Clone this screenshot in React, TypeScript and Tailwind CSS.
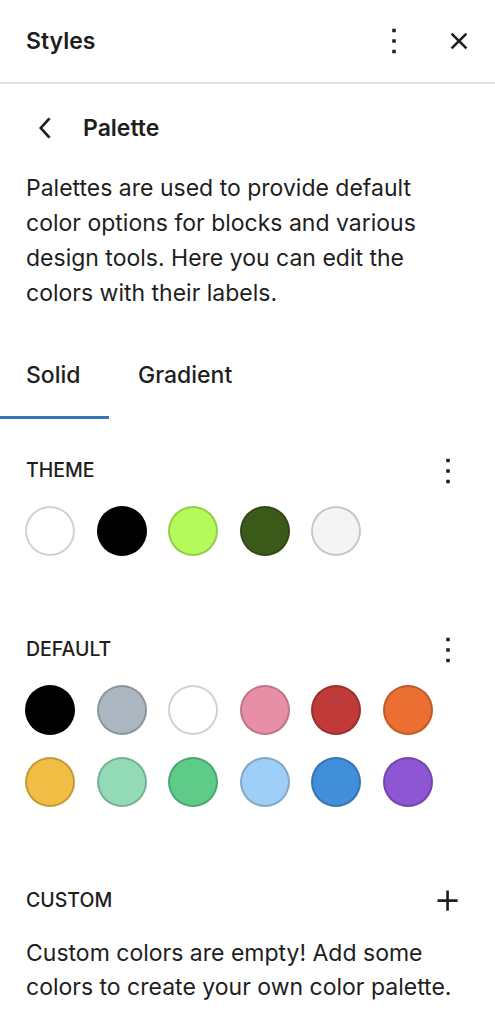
import React from 'react';

const themeColors = ['#ffffff', '#000000', '#b4fa5a', '#3b5a1a', '#f4f4f4'];

const defaultColors = [
  '#000000',
  '#abb6c0',
  '#ffffff',
  '#e78fa6',
  '#bf3a38',
  '#eb6f30',
  '#f1bd44',
  '#93dab6',
  '#5ecb88',
  '#9fcef6',
  '#418fd9',
  '#8e55d4',
];

// WordPress icons, 24 unit grid drawn at 42px
function MoreVertical() {
  return (
    <svg width="42" height="42" viewBox="0 0 24 24" fill="#1e1e1e" aria-hidden="true">
      <path d="M13 19h-2v-2h2v2zm0-6h-2v-2h2v2zm0-6h-2V5h2v2z" />
    </svg>
  );
}

function CloseSmall() {
  return (
    <svg width="42" height="42" viewBox="0 0 24 24" fill="#1e1e1e" aria-hidden="true">
      <path d="M12 13.06l3.712 3.713 1.061-1.06L13.061 12l3.712-3.712-1.06-1.06L12 10.938 8.288 7.227l-1.061 1.06L10.939 12l-3.712 3.712 1.06 1.061L12 13.061z" />
    </svg>
  );
}

function ChevronLeft() {
  return (
    <svg width="42" height="42" viewBox="0 0 24 24" fill="#1e1e1e" aria-hidden="true">
      <path d="M14.6 7l-1.2-1L8 12l5.4 6 1.2-1-4.6-5z" />
    </svg>
  );
}

function Plus() {
  return (
    <svg width="42" height="42" viewBox="0 0 24 24" fill="#1e1e1e" aria-hidden="true">
      <path d="M11 12.5V17.5H12.5V12.5H17.5V11H12.5V6H11V11H6V12.5H11Z" />
    </svg>
  );
}

function Swatch({ color }: { color: string }) {
  return (
    <button
      type="button"
      aria-label={color}
      className="w-[50px] h-[50px] rounded-full shadow-[inset_0_0_0_2px_rgba(0,0,0,0.18)]"
      style={{ backgroundColor: color }}
    />
  );
}

function SectionHeader({ title, action }: { title: string; action: React.ReactNode }) {
  return (
    <div className="flex items-center justify-between h-[48px] pl-[26px] pr-[26px]">
      <h3 className="text-[19.5px] font-medium uppercase text-[#1e1e1e]">{title}</h3>
      {action}
    </div>
  );
}

export default function App() {
  return (
    <div
      className="w-[495px] h-[1024px] bg-white overflow-hidden text-[#1e1e1e]"
      style={{ fontFamily: 'Inter, "Noto Sans", sans-serif' }}
    >
      {/* Panel header */}
      <header className="flex items-center justify-between h-[84px] pl-[26px] pr-[15px] border-b-2 border-[#e0e0e0]">
        <h2 className="text-[23px] font-semibold">Styles</h2>
        <div className="flex items-center gap-[23px]">
          <MoreVertical />
          <CloseSmall />
        </div>
      </header>

      {/* Navigator back row */}
      <div className="flex items-center h-[48px] mt-[20px] pl-[25px] gap-[16px]">
        <ChevronLeft />
        <h2 className="text-[23px] font-semibold">Palette</h2>
      </div>

      <p className="mt-[19px] pl-[26px] pr-[28px] text-[23px] leading-[35px]">
        Palettes are used to provide default color options for blocks and various design tools. Here you can edit the colors with their labels.
      </p>

      {/* Tabs */}
      <div className="flex mt-[24px] h-[84px]">
        <button type="button" className="w-[109px] pl-[26px] text-left text-[23px] font-medium border-b-[3px] border-[#3675b8]">
          Solid
        </button>
        <button type="button" className="pl-[29px] text-left text-[23px] font-medium border-b-[3px] border-transparent">
          Gradient
        </button>
      </div>

      {/* Theme palette */}
      <section className="mt-[28px]">
        <SectionHeader title="Theme" action={<MoreVertical />} />
        <div className="flex gap-[21.5px] px-[25px] mt-[11px]">
          {themeColors.map((c, i) => (
            <Swatch key={i} color={c} />
          ))}
        </div>
      </section>

      {/* Default palette */}
      <section className="mt-[70px]">
        <SectionHeader title="Default" action={<MoreVertical />} />
        <div className="grid grid-cols-[repeat(6,50px)] gap-x-[21.5px] gap-y-[22px] px-[25px] mt-[11px]">
          {defaultColors.map((c, i) => (
            <Swatch key={i} color={c} />
          ))}
        </div>
      </section>

      {/* Custom palette */}
      <section className="mt-[70px]">
        <SectionHeader title="Custom" action={<Plus />} />
        <p className="mt-[11px] pl-[26px] pr-[28px] text-[23px] leading-[34px]">
          Custom colors are empty! Add some colors to create your own color palette.
        </p>
      </section>
    </div>
  );
}
